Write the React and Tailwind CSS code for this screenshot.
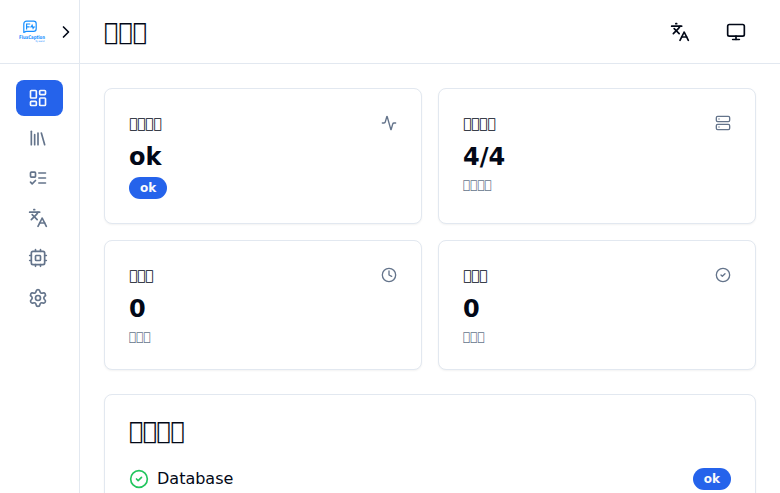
import React from "react";
import {
  Activity, ChevronRight, CircleCheck, Clock, Languages, LayoutDashboard,
  Library, Monitor, Server, Settings,
} from "lucide-react";

// A private-use code point: the browser draws the font's own empty box.
const BOX = "\uE000";

function Stroke({ className, children }) {
  return (
    <svg viewBox="0 0 24 24" fill="none" stroke="currentColor" strokeWidth="2" strokeLinecap="round" strokeLinejoin="round" className={className}>
      {children}
    </svg>
  );
}

function Tasks({ className }) {
  return (
    <Stroke className={className}>
      <rect x="3" y="5" width="6" height="6" rx="1" />
      <path d="m3 17 2 2 4-4M13 6h8M13 12h8M13 18h8" />
    </Stroke>
  );
}

function Chip({ className }) {
  return (
    <Stroke className={className}>
      <rect x="4" y="4" width="16" height="16" rx="2" />
      <rect x="9" y="9" width="6" height="6" rx="1" />
      <path d="M15 2v2M15 20v2M2 15h2M2 9h2M20 15h2M20 9h2M9 2v2M9 20v2" />
    </Stroke>
  );
}

const NAV = [LayoutDashboard, Library, Tasks, Languages, Chip, Settings];

function Logo() {
  return (
    <svg width="32" height="32" viewBox="-2 -2 32 32" className="shrink-0 overflow-visible" fill="none" stroke="#1890ff">
      <path d="M5.8 14.4V6a2.8 2.8 0 0 1 2.8-2.8h7a2.6 2.6 0 0 1 2.6 2.6v5a2.6 2.6 0 0 1-2.6 2.6H8.2z" strokeWidth="1.2" strokeLinejoin="round" />
      <path d="M8.6 11.6V6h3.6M8.6 8.8h3M12.2 9h1l.9-1.8 1 3 .7-1.2h1.4" strokeWidth="1.2" />
      <text x="1" y="21" fontSize="5" fontWeight="700" textLength="26" lengthAdjust="spacingAndGlyphs" fill="#1890ff" stroke="none">FluxCaption</text>
      <text x="17.5" y="24" fontSize="2.6" textLength="9" lengthAdjust="spacingAndGlyphs" fill="#1890ff" stroke="none">by asaist</text>
    </svg>
  );
}

function Badge({ children }) {
  return (
    <span className="inline-flex items-center rounded-full border border-transparent bg-[#2563eb] px-2.5 py-0.5 text-xs font-semibold text-[#f8fafc]">
      {children}
    </span>
  );
}

function StatCard({ title, icon: Icon, value, children }) {
  return (
    <div className="rounded-lg border border-[#e2e8f0] bg-white p-6 shadow-xs">
      <div className="flex items-center justify-between pb-2">
        <h3 className="text-sm font-medium tracking-tight">{title}</h3>
        <Icon className="size-4 text-[#64748b]" />
      </div>
      <div className="text-2xl font-bold">{value}</div>
      <div className="mt-1 flex text-xs text-[#64748b]">{children}</div>
    </div>
  );
}

export default function App() {
  return (
    <div className="flex h-screen overflow-hidden bg-white font-['DejaVu_Sans',sans-serif] text-[#020817]">
      <aside className="flex w-20 shrink-0 flex-col border-r border-[#e2e8f0]">
        <div className="flex h-16 shrink-0 items-center justify-between border-b border-[#e2e8f0] pr-[3px] pl-4">
          <Logo />
          <button className="flex size-5 items-center justify-center"><ChevronRight className="size-5 shrink-0" /></button>
        </div>
        <nav className="flex flex-col gap-1 p-4">
          {NAV.map((Icon, i) => (
            <a key={i} className={i === 0
              ? "flex h-9 items-center rounded-lg bg-[#2563eb] px-3 text-[#f8fafc]"
              : "flex h-9 items-center rounded-lg px-3 text-[#64748b]"}>
              <Icon className="size-5 shrink-0" />
            </a>
          ))}
        </nav>
      </aside>
      <div className="flex min-w-0 flex-1 flex-col">
        <header className="flex h-16 shrink-0 items-center justify-between border-b border-[#e2e8f0] px-6">
          <h1 className="text-2xl font-semibold">{BOX.repeat(3)}</h1>
          <div className="flex gap-4">
            <button className="flex size-10 items-center justify-center"><Languages className="size-5" /></button>
            <button className="flex size-10 items-center justify-center"><Monitor className="size-5" /></button>
          </div>
        </header>
        <main className="flex-1 overflow-hidden p-6">
          <div className="grid grid-cols-2 gap-4">
            <StatCard title={BOX.repeat(4)} icon={Activity} value="ok"><Badge>ok</Badge></StatCard>
            <StatCard title={BOX.repeat(4)} icon={Server} value="4/4">{BOX.repeat(4)}</StatCard>
            <StatCard title={BOX.repeat(3)} icon={Clock} value="0">{BOX.repeat(3)}</StatCard>
            <StatCard title={BOX.repeat(3)} icon={CircleCheck} value="0">{BOX.repeat(3)}</StatCard>
          </div>
          <section className="mt-6 rounded-lg border border-[#e2e8f0] bg-white p-6 shadow-xs">
            <h2 className="text-2xl leading-none font-semibold tracking-tight">{BOX.repeat(4)}</h2>
            <div className="mt-6 flex items-center justify-between">
              <div className="flex items-center gap-2">
                <CircleCheck className="size-5 text-[#22c55e]" />
                <span>Database</span>
              </div>
              <Badge>ok</Badge>
            </div>
          </section>
        </main>
      </div>
    </div>
  );
}
